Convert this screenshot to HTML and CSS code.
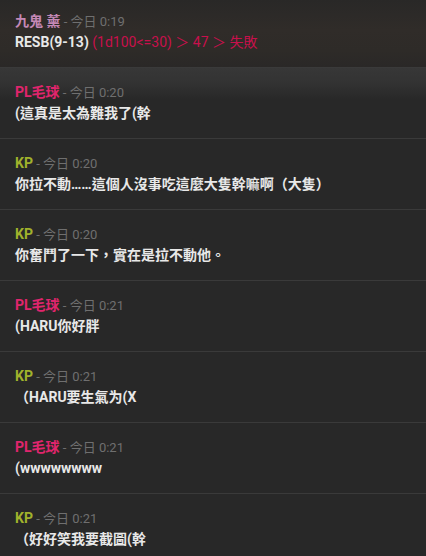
FILE: index.html
```html
<!DOCTYPE html>
<html lang="zh-Hant">
  <head>
    <meta charset="utf-8" />
    <title>Chat log</title>
    <meta name="viewport" content="width=device-width, initial-scale=1" />
    <link rel="stylesheet" href="styles.css">
  </head>
  <body>
    <div class="log">
      <div class="msg msg-first">
        <div class="meta"><span class="name name-kuki">九鬼 薰</span><span class="time"> - 今日 0:19</span></div>
        <div class="text">RESB(9-13) <span class="roll">(1d100&lt;=30) ＞ 47 ＞ 失敗</span></div>
      </div>
      <div class="msg msg-lit">
        <div class="meta"><span class="name name-pl">PL毛球</span><span class="time"> - 今日 0:20</span></div>
        <div class="text">(這真是太為難我了(幹</div>
      </div>
      <div class="msg">
        <div class="meta"><span class="name name-kp">KP</span><span class="time"> - 今日 0:20</span></div>
        <div class="text">你拉不動……這個人沒事吃這麼大隻幹嘛啊（大隻）</div>
      </div>
      <div class="msg">
        <div class="meta"><span class="name name-kp">KP</span><span class="time"> - 今日 0:20</span></div>
        <div class="text">你奮鬥了一下，實在是拉不動他。</div>
      </div>
      <div class="msg">
        <div class="meta"><span class="name name-pl">PL毛球</span><span class="time"> - 今日 0:21</span></div>
        <div class="text">(HARU你好胖</div>
      </div>
      <div class="msg">
        <div class="meta"><span class="name name-kp">KP</span><span class="time"> - 今日 0:21</span></div>
        <div class="text">（HARU要生氣为(X</div>
      </div>
      <div class="msg">
        <div class="meta"><span class="name name-pl">PL毛球</span><span class="time"> - 今日 0:21</span></div>
        <div class="text">(wwwwwwww</div>
      </div>
      <div class="msg">
        <div class="meta"><span class="name name-kp">KP</span><span class="time"> - 今日 0:21</span></div>
        <div class="text">（好好笑我要截圖(幹</div>
      </div>
    </div>
  </body>
</html>
```

FILE: styles.css
```css
body {
  margin: 0;
  background: #282828;
  font-family: Roboto, 'Noto Sans CJK SC', sans-serif;
  color: #e6e6e6;
  overflow: hidden;
}
.log {
  display: flex;
  flex-direction: column;
}
.msg {
  padding: 14px 15px;
  border-top: 1px solid #3a3a3a;
}
.msg-first {
  border-top: 0;
  padding-top: 11px;
  padding-bottom: 14px;
  background: linear-gradient(to bottom, #292827 0%, #302c29 45%, #2e2b28 75%, #2a2827 100%);
}
.msg-lit {
  background: linear-gradient(to bottom, #373737 0%, #333333 20%, #282828 45%);
}
.meta {
  height: 20px;
  line-height: 20px;
  font-size: 14px;
}
.name {
  font-weight: 700;
}
.name-kuki {
  color: #c488b6;
}
.name-pl {
  color: #e0256d;
}
.name-kp {
  color: #a1b22c;
}
.time {
  color: #6f6f6f;
  font-size: 13px;
}
.text {
  height: 22px;
  line-height: 22px;
  font-size: 14px;
  font-weight: 700;
  color: #e8e8e8;
}
.roll {
  font-weight: 400;
  color: #c8104c;
}
```
